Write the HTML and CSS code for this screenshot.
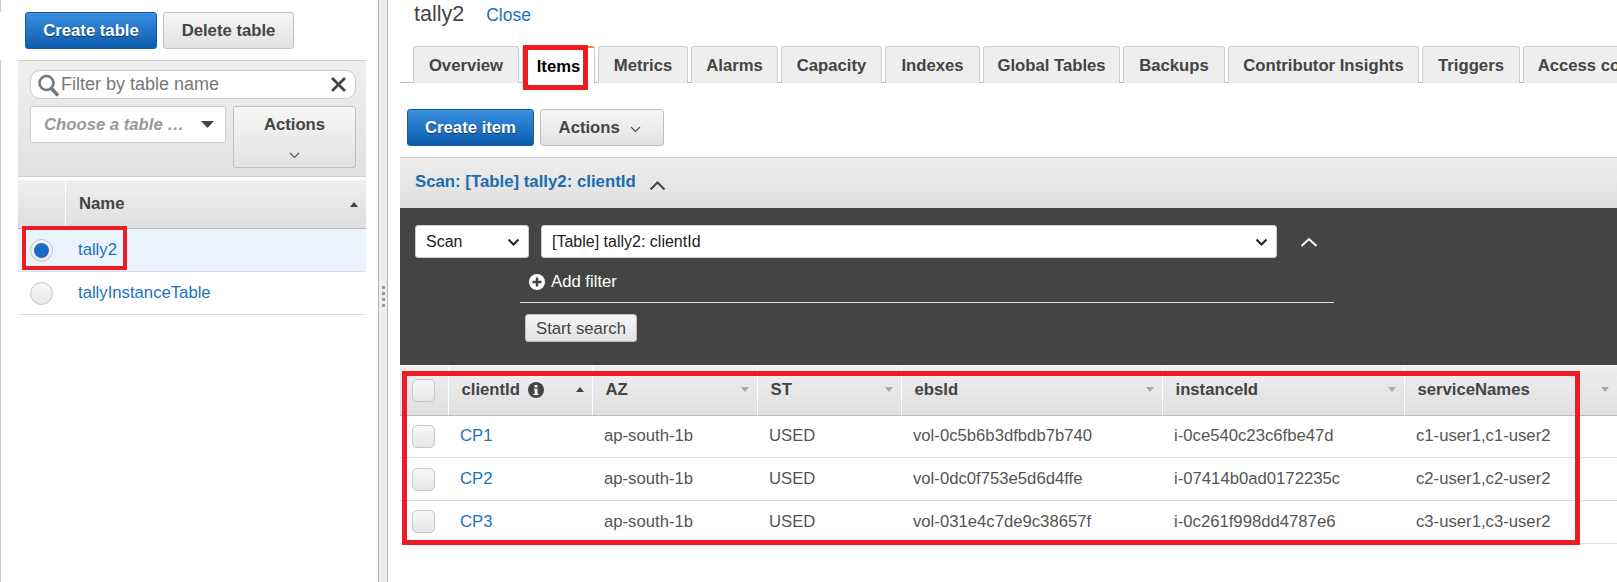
FILE: index.html
```html
<!DOCTYPE html>
<html lang="en">
  <head>
    <meta charset="UTF-8" />
    <title>DynamoDB tables</title>
    <link rel="stylesheet" href="styles.css">
  </head>
  <body>
    <div class="page">
      <div class="left_pane">
        <div class="button_row">
          <button class="btn btn_primary btn_create_table">Create table</button>
          <button class="btn btn_delete_table">Delete table</button>
        </div>

        <div class="filter_panel">
          <div class="filter_input">
            <svg class="search_icon" width="22" height="26" viewBox="0 0 22 26">
              <circle cx="9.5" cy="11" r="7" fill="none" stroke="#777" stroke-width="2.6" />
              <path d="M14.5 16.5l5.5 6" stroke="#777" stroke-width="3.4" stroke-linecap="round" />
            </svg>
            <span class="filter_text">Filter by table name</span>
            <svg class="clear_icon" width="17" height="17" viewBox="0 0 17 17">
              <path d="M2 2l13 13M15 2L2 15" stroke="#444" stroke-width="2.8" />
            </svg>
          </div>
          <div class="filter_controls">
            <div class="choose_select">
              <span>Choose a table …</span>
              <svg width="13" height="7" viewBox="0 0 13 7"><path d="M0 0h13L6.500 7z" fill="#444" /></svg>
            </div>
            <button class="btn btn_actions_stack">
              <span>Actions</span>
              <svg width="11" height="7" viewBox="0 0 11 7"><path d="M1 1l4.500 4.500L10 1" fill="none" stroke="#555" stroke-width="1.200" /></svg>
            </button>
          </div>
        </div>

        <div class="name_table">
          <div class="name_head">
            <div class="name_head_blank"></div>
            <div class="name_head_title">
              <span>Name</span>
              <i class="sort_up"></i>
            </div>
          </div>
          <div class="name_row name_row_selected">
            <div class="radio_cell"><span class="radio radio_on"></span></div>
            <a class="link">tally2</a>
          </div>
          <div class="name_row">
            <div class="radio_cell"><span class="radio"></span></div>
            <a class="link">tallyInstanceTable</a>
          </div>
          <div class="mark mark_radio"></div>
        </div>
      </div>

      <div class="splitter">
        <div class="splitter_dots"><i></i><i></i><i></i><i></i></div>
      </div>

      <div class="right_pane">
        <div class="title_row">
          <span class="title">tally2</span>
          <a class="link close_link">Close</a>
        </div>

        <div class="tabs">
          <div class="tab">Overview</div>
          <div class="tab tab_active">Items<div class="mark mark_tab"></div></div>
          <div class="tab">Metrics</div>
          <div class="tab">Alarms</div>
          <div class="tab">Capacity</div>
          <div class="tab">Indexes</div>
          <div class="tab">Global Tables</div>
          <div class="tab">Backups</div>
          <div class="tab">Contributor Insights</div>
          <div class="tab">Triggers</div>
          <div class="tab">Access control</div>
        </div>

        <div class="toolbar">
          <button class="btn btn_primary btn_create_item">Create item</button>
          <button class="btn btn_actions">
            Actions
            <svg width="11" height="7" viewBox="0 0 11 7"><path d="M1 1l4.500 4.500L10 1" fill="none" stroke="#555" stroke-width="1.200" /></svg>
          </button>
        </div>

        <div class="scan_header">
          <span class="scan_title">Scan: [Table] tally2: clientId</span>
          <svg class="scan_chevron" width="17" height="11" viewBox="0 0 17 11"><path d="M1.500 9.500l7-7 7 7" fill="none" stroke="#444" stroke-width="2" /></svg>
        </div>

        <div class="scan_panel">
          <div class="scan_selects">
            <div class="select select_mode">
              <span>Scan</span>
              <svg width="13" height="8" viewBox="0 0 13 8"><path d="M1.500 1.500l5 5 5-5" fill="none" stroke="#222" stroke-width="2" /></svg>
            </div>
            <div class="select select_table">
              <span>[Table] tally2: clientId</span>
              <svg width="13" height="8" viewBox="0 0 13 8"><path d="M1.500 1.500l5 5 5-5" fill="none" stroke="#222" stroke-width="2" /></svg>
            </div>
            <svg class="collapse_icon" width="18" height="10" viewBox="0 0 18 10"><path d="M1.500 9L9 2l7.500 7" fill="none" stroke="#fff" stroke-width="2" /></svg>
          </div>
          <div class="filter_block">
            <div class="add_filter">
              <svg width="16" height="16" viewBox="0 0 16 16">
                <circle cx="8" cy="8" r="8" fill="#fff" />
                <path d="M8 3.500v9M3.500 8h9" stroke="#444" stroke-width="2.400" />
              </svg>
              <span>Add filter</span>
            </div>
            <button class="btn btn_search">Start search</button>
          </div>
        </div>

        <div class="items_wrap">
          <table class="items">
            <colgroup>
              <col class="col_check" />
              <col class="col_client" />
              <col class="col_az" />
              <col class="col_st" />
              <col class="col_ebs" />
              <col class="col_instance" />
              <col class="col_service" />
            </colgroup>
            <thead>
              <tr>
                <th><span class="checkbox"></span></th>
                <th>clientId
                  <svg class="info_icon" width="16" height="16" viewBox="0 0 16 16">
                    <circle cx="8" cy="8" r="8" fill="#444" />
                    <path d="M6.500 3h3v2.500h-3zM6 6.700h3.500v5h1V13H5.500v-1.300h1.200V8H6z" fill="#fff" />
                  </svg>
                  <i class="sort_up"></i>
                </th>
                <th>AZ<i class="sort_down"></i></th>
                <th>ST<i class="sort_down"></i></th>
                <th>ebsId<i class="sort_down"></i></th>
                <th>instanceId<i class="sort_down"></i></th>
                <th>serviceNames<i class="sort_down"></i></th>
              </tr>
            </thead>
            <tbody>
              <tr>
                <td><span class="checkbox"></span></td>
                <td><a class="link">CP1</a></td>
                <td>ap-south-1b</td>
                <td>USED</td>
                <td>vol-0c5b6b3dfbdb7b740</td>
                <td>i-0ce540c23c6fbe47d</td>
                <td>c1-user1,c1-user2</td>
              </tr>
              <tr>
                <td><span class="checkbox"></span></td>
                <td><a class="link">CP2</a></td>
                <td>ap-south-1b</td>
                <td>USED</td>
                <td>vol-0dc0f753e5d6d4ffe</td>
                <td>i-07414b0ad0172235c</td>
                <td>c2-user1,c2-user2</td>
              </tr>
              <tr>
                <td><span class="checkbox"></span></td>
                <td><a class="link">CP3</a></td>
                <td>ap-south-1b</td>
                <td>USED</td>
                <td>vol-031e4c7de9c38657f</td>
                <td>i-0c261f998dd4787e6</td>
                <td>c3-user1,c3-user2</td>
              </tr>
            </tbody>
          </table>
          <div class="mark mark_table"></div>
        </div>
      </div>
    </div>
  </body>
</html>
```

FILE: styles.css
```css
*,
*::before,
*::after {
  box-sizing: border-box;
}
html,
body {
  margin: 0;
  padding: 0;
  height: 100%;
  overflow: hidden;
  background: #fff;
}
body {
  font-family: "Liberation Sans", Arial, sans-serif;
  font-size: 16.7px;
  color: #444;
}

.page {
  display: flex;
  width: 1617px;
  height: 582px;
}

.link {
  color: #1a73ba;
}

/* red annotation boxes drawn over the screenshot */
.mark {
  position: absolute;
  border: 4px solid #ed1c24;
  pointer-events: none;
}
.mark_radio {
  left: 4px;
  top: 46px;
  width: 105px;
  height: 44px;
}
.mark_tab {
  left: 0;
  top: -3px;
  width: 65px;
  height: 45px;
  border-width: 5px;
}
.mark_table {
  left: 2px;
  top: 5px;
  width: 1178px;
  height: 174px;
  border-width: 5px;
}

/* buttons */
.btn {
  display: block;
  height: 37px;
  padding: 0;
  border: 1px solid #c0c0c0;
  border-radius: 3px;
  background: linear-gradient(#f6f6f6, #e2e2e2);
  color: #444;
  font: bold 16.7px "Liberation Sans", Arial, sans-serif;
}
.btn_primary {
  border-color: #15599f;
  background: linear-gradient(#3a8fe0, #0c5cad);
  color: #fff;
  text-shadow: 0 1px 1px rgba(0, 0, 0, 0.5);
}

/* left pane */
.left_pane {
  width: 378px;
  flex: none;
  padding: 12px 12px 0 18px;
  background:
    linear-gradient(#ccc, #ccc) 0 0 / 1px 12px no-repeat,
    linear-gradient(#ccc, #ccc) 0 60px / 1px 100% no-repeat;
}
.button_row {
  display: flex;
  gap: 6px;
  margin-left: 7px;
}
.btn_create_table {
  width: 132px;
}
.btn_delete_table {
  width: 131px;
}

.filter_panel {
  height: 117px;
  margin-top: 11px;
  padding: 9px 10px 0 12px;
  border-top: 1px solid #ccc;
  border-bottom: 1px solid #ccc;
  background: linear-gradient(#efefef, #e2e2e2);
}
.filter_input {
  display: flex;
  align-items: center;
  height: 29px;
  padding: 0 8px 0 6px;
  border: 1px solid #ccc;
  border-radius: 10px;
  background: #fff;
}
.search_icon {
  flex: none;
}
.filter_text {
  margin-left: 2px;
  font-size: 18px;
  color: #777;
}
.clear_icon {
  margin-left: auto;
}
.filter_controls {
  display: flex;
  gap: 7px;
  margin-top: 7px;
  align-items: flex-start;
}
.choose_select {
  display: flex;
  align-items: center;
  justify-content: space-between;
  width: 196px;
  height: 37px;
  padding: 0 11px 0 13px;
  border: 1px solid #ccc;
  border-radius: 3px;
  background: #fff;
  color: #999;
  font-style: italic;
  font-weight: bold;
  font-size: 16.7px;
}
.btn_actions_stack {
  display: flex;
  flex-direction: column;
  align-items: center;
  gap: 17px;
  width: 123px;
  height: 62px;
  padding-top: 8px;
}

.name_table {
  position: relative;
  margin-top: 3px;
}
.name_head {
  display: flex;
  height: 49px;
  border-bottom: 1px solid #bbb;
  background: linear-gradient(#efefef, #dfdfdf);
}
.name_head_blank {
  width: 48px;
  border-right: 1px solid #fff;
}
.name_head_title {
  display: flex;
  flex: 1;
  align-items: center;
  justify-content: space-between;
  padding: 0 8px 0 13px;
  font-weight: bold;
}
.name_row {
  display: flex;
  align-items: center;
  height: 43px;
  border-bottom: 1px solid #ddd;
}
.name_row_selected {
  background: #eaf3fe;
}
.radio_cell {
  width: 60px;
  padding-left: 12px;
}
.radio {
  display: flex;
  align-items: center;
  justify-content: center;
  width: 23px;
  height: 23px;
  border: 1px solid #c4c4c4;
  border-radius: 50%;
  background: linear-gradient(#f8f8f8, #e6e6e6);
}
.radio_on::before {
  content: "";
  width: 15px;
  height: 15px;
  border-radius: 50%;
  background: #1a6cc4;
}

/* sort carets */
.sort_up,
.sort_down {
  display: block;
  width: 0;
  height: 0;
  border-left: 4.5px solid transparent;
  border-right: 4.5px solid transparent;
}
.sort_up {
  border-bottom: 5px solid #444;
}
.sort_down {
  border-top: 5px solid #aaa;
}

/* splitter */
.splitter {
  position: relative;
  display: flex;
  flex: none;
  align-items: center;
  justify-content: center;
  width: 10px;
  height: 100%;
  border-left: 1px solid #b5b5b5;
  border-right: 1px solid #b5b5b5;
  background: #eee;
}
.splitter_dots {
  display: flex;
  flex-direction: column;
  gap: 3px;
  margin-top: 10px;
}
.splitter_dots i {
  display: block;
  width: 3px;
  height: 3px;
  background: #999;
}

/* right pane */
.right_pane {
  flex: 1;
  min-width: 0;
  overflow: hidden;
  padding-left: 12px;
}
.title_row {
  display: flex;
  align-items: baseline;
  height: 46px;
  padding: 2px 0 0 14px;
}
.title {
  font-size: 21.5px;
  color: #444;
}
.close_link {
  margin-left: 22px;
  font-size: 17.5px;
}

.tabs {
  display: flex;
  height: 37px;
  padding-left: 13px;
  border-bottom: 1px solid #bbb;
  white-space: nowrap;
}
.tab {
  position: relative;
  flex: none;
  height: 37px;
  margin-right: 3px;
  padding-top: 9px;
  border: 1px solid #ccc;
  border-bottom: 0;
  border-radius: 3px 3px 0 0;
  background: #eee;
  font-weight: bold;
  text-align: center;
}
.tab:nth-child(1) { width: 106px; }
.tab:nth-child(2) { width: 73px; }
.tab:nth-child(3) { width: 90px; }
.tab:nth-child(4) { width: 87px; }
.tab:nth-child(5) { width: 101px; }
.tab:nth-child(6) { width: 95px; }
.tab:nth-child(7) { width: 137px; }
.tab:nth-child(8) { width: 102px; }
.tab:nth-child(9) { width: 191px; }
.tab:nth-child(10) { width: 98px; }
.tab:nth-child(11) { width: 149px; }
.tab_active {
  height: 38px;
  border-top: 2px solid #e8912d;
  background: #fff;
  color: #000;
}

.toolbar {
  display: flex;
  gap: 6px;
  height: 74px;
  padding: 26px 0 0 7px;
}
.btn_create_item {
  width: 127px;
}
.btn_actions {
  width: 124px;
  padding-right: 4px;
}
.btn_actions svg {
  margin-left: 6px;
}

.scan_header {
  display: flex;
  align-items: center;
  height: 51px;
  padding-left: 15px;
  border-top: 1px solid #ccc;
  background: linear-gradient(#eee, #dfdfdf);
}
.scan_title {
  color: #1a6cb0;
  font-weight: bold;
  font-size: 16.8px;
  margin-top: -2px;
}
.scan_chevron {
  margin: 5px 0 0 13px;
}

.scan_panel {
  height: 157px;
  padding: 17px 0 0 15px;
  background: #444;
}
.scan_selects {
  display: flex;
  align-items: center;
  gap: 12px;
}
.select {
  display: flex;
  align-items: center;
  justify-content: space-between;
  height: 33px;
  padding: 0 8px 0 10px;
  border: 1px solid #ccc;
  border-radius: 3px;
  background: #fff;
  color: #222;
  font-size: 16px;
}
.select_mode {
  width: 114px;
}
.select_table {
  width: 736px;
}
.collapse_icon {
  margin-left: 11px;
}
.filter_block {
  width: 814px;
  margin-left: 105px;
}
.add_filter {
  display: flex;
  align-items: center;
  gap: 6px;
  height: 45px;
  padding: 3px 0 0 9px;
  border-bottom: 1px solid #ddd;
  color: #fff;
  font-size: 16.7px;
}
.btn_search {
  width: 112px;
  height: 28px;
  margin: 11px 0 0 5px;
  padding-top: 2px;
  font-weight: normal;
  font-size: 16.7px;
}

.items_wrap {
  position: relative;
  width: 1217px;
}
.items {
  width: 1217px;
  margin-top: 1px;
  border-collapse: collapse;
  table-layout: fixed;
}
.col_check { width: 48px; }
.col_client { width: 144px; }
.col_az { width: 165px; }
.col_st { width: 144px; }
.col_ebs { width: 261px; }
.col_instance { width: 242px; }
.col_service { width: 213px; }

.items th {
  position: relative;
  height: 49px;
  padding: 0 0 0 13px;
  border-left: 1px solid #fff;
  border-bottom: 1px solid #bbb;
  background: linear-gradient(#efefef, #dfdfdf);
  font-weight: bold;
  text-align: left;
  vertical-align: middle;
}
.items th:first-child,
.items td:first-child {
  padding-left: 12px;
  border-left: 0;
}
.items th .sort_up,
.items th .sort_down {
  position: absolute;
  right: 8px;
  top: 21px;
}
.items td {
  height: 42.7px;
  padding: 0 0 0 12px;
  border-bottom: 1px solid #ddd;
  color: #555;
  white-space: nowrap;
}
.info_icon {
  margin-left: 3px;
  vertical-align: -3px;
}
.checkbox {
  display: block;
  width: 23px;
  height: 23px;
  border: 1px solid #c8c8c8;
  border-radius: 5px;
  background: linear-gradient(#f8f8f8, #e6e6e6);
}
```
